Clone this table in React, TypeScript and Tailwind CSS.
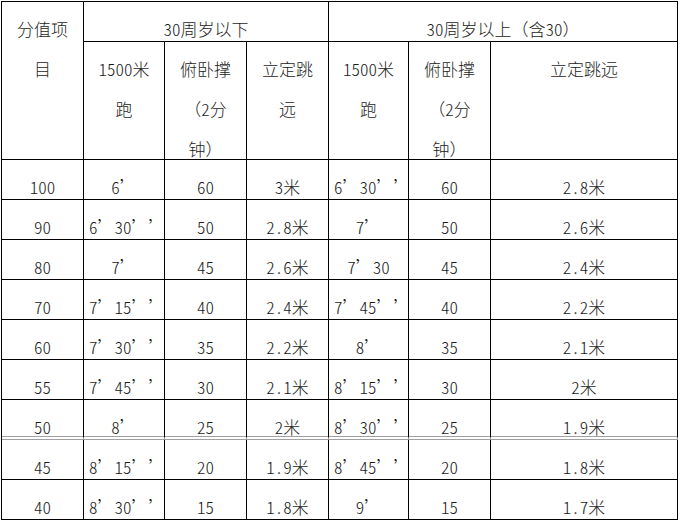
import React from 'react'

const COLS = 'grid-cols-[82px_81px_82px_82px_80px_82px_187px]'

const ROWS = [
    ['100', '6’', '60', '3米', '6’30’’', '60', '2.8米'],
    ['90', '6’30’’', '50', '2.8米', '7’', '50', '2.6米'],
    ['80', '7’', '45', '2.6米', '7’30', '45', '2.4米'],
    ['70', '7’15’’', '40', '2.4米', '7’45’’', '40', '2.2米'],
    ['60', '7’30’’', '35', '2.2米', '8’', '35', '2.1米'],
    ['55', '7’45’’', '30', '2.1米', '8’15’’', '30', '2米'],
    ['50', '8’', '25', '2米', '8’30’’', '25', '1.9米'],
    ['45', '8’15’’', '20', '1.9米', '8’45’’', '20', '1.8米'],
    ['40', '8’30’’', '15', '1.8米', '9’', '15', '1.7米'],
]

// full-width marks: quote sits on the left of an em box
const Q = () => <span className="inline-block w-[1em] text-left [font-feature-settings:normal]">’</span>
const P = ({ children }: { children: React.ReactNode }) => (
    <span className="[font-feature-settings:normal]">{children}</span>
)

function renderValue(v: string) {
    const parts = v.split('’')
    return parts.map((p, i) => (
        <React.Fragment key={i}>
            {p}
            {i < parts.length - 1 && <Q />}
        </React.Fragment>
    ))
}

const cell = 'border-r border-b border-black text-center px-[5px] pt-[7px] leading-[40px] whitespace-nowrap'

export default function App() {
    return (
        <div className="min-h-[521px] w-[680px] overflow-hidden bg-white pl-px pt-px text-[#1c1c1c] text-[17px] font-light font-['Noto_Sans_CJK_SC',sans-serif] [font-feature-settings:'hwid']">
            <div className={`grid ${COLS} grid-rows-[40px_118px_repeat(9,40px)] w-max border-l border-t border-black`}>
                <div className={`${cell} row-span-2`}>
                    分值项<br />目
                </div>
                <div className={`${cell} col-span-3`}>30周岁以下</div>
                <div className={`${cell} col-span-3`}>
                    30周岁以上<P>（</P>含30<P>）</P>
                </div>

                <div className={cell}>1500米<br />跑</div>
                <div className={cell}>俯卧撑<br /><P>（</P>2分<br />钟<P>）</P></div>
                <div className={cell}>立定跳<br />远</div>
                <div className={cell}>1500米<br />跑</div>
                <div className={cell}>俯卧撑<br /><P>（</P>2分<br />钟<P>）</P></div>
                <div className={cell}>立定跳远</div>

                {ROWS.map((row, r) =>
                    row.map((v, c) => (
                        <div
                            key={`${r}-${c}`}
                            className={`${cell} ${r === 6 ? 'border-b-4 [border-bottom-style:double] border-b-[#a0a0a0]' : ''}`}
                        >
                            {renderValue(v)}
                        </div>
                    ))
                )}
            </div>
        </div>
    )
}
